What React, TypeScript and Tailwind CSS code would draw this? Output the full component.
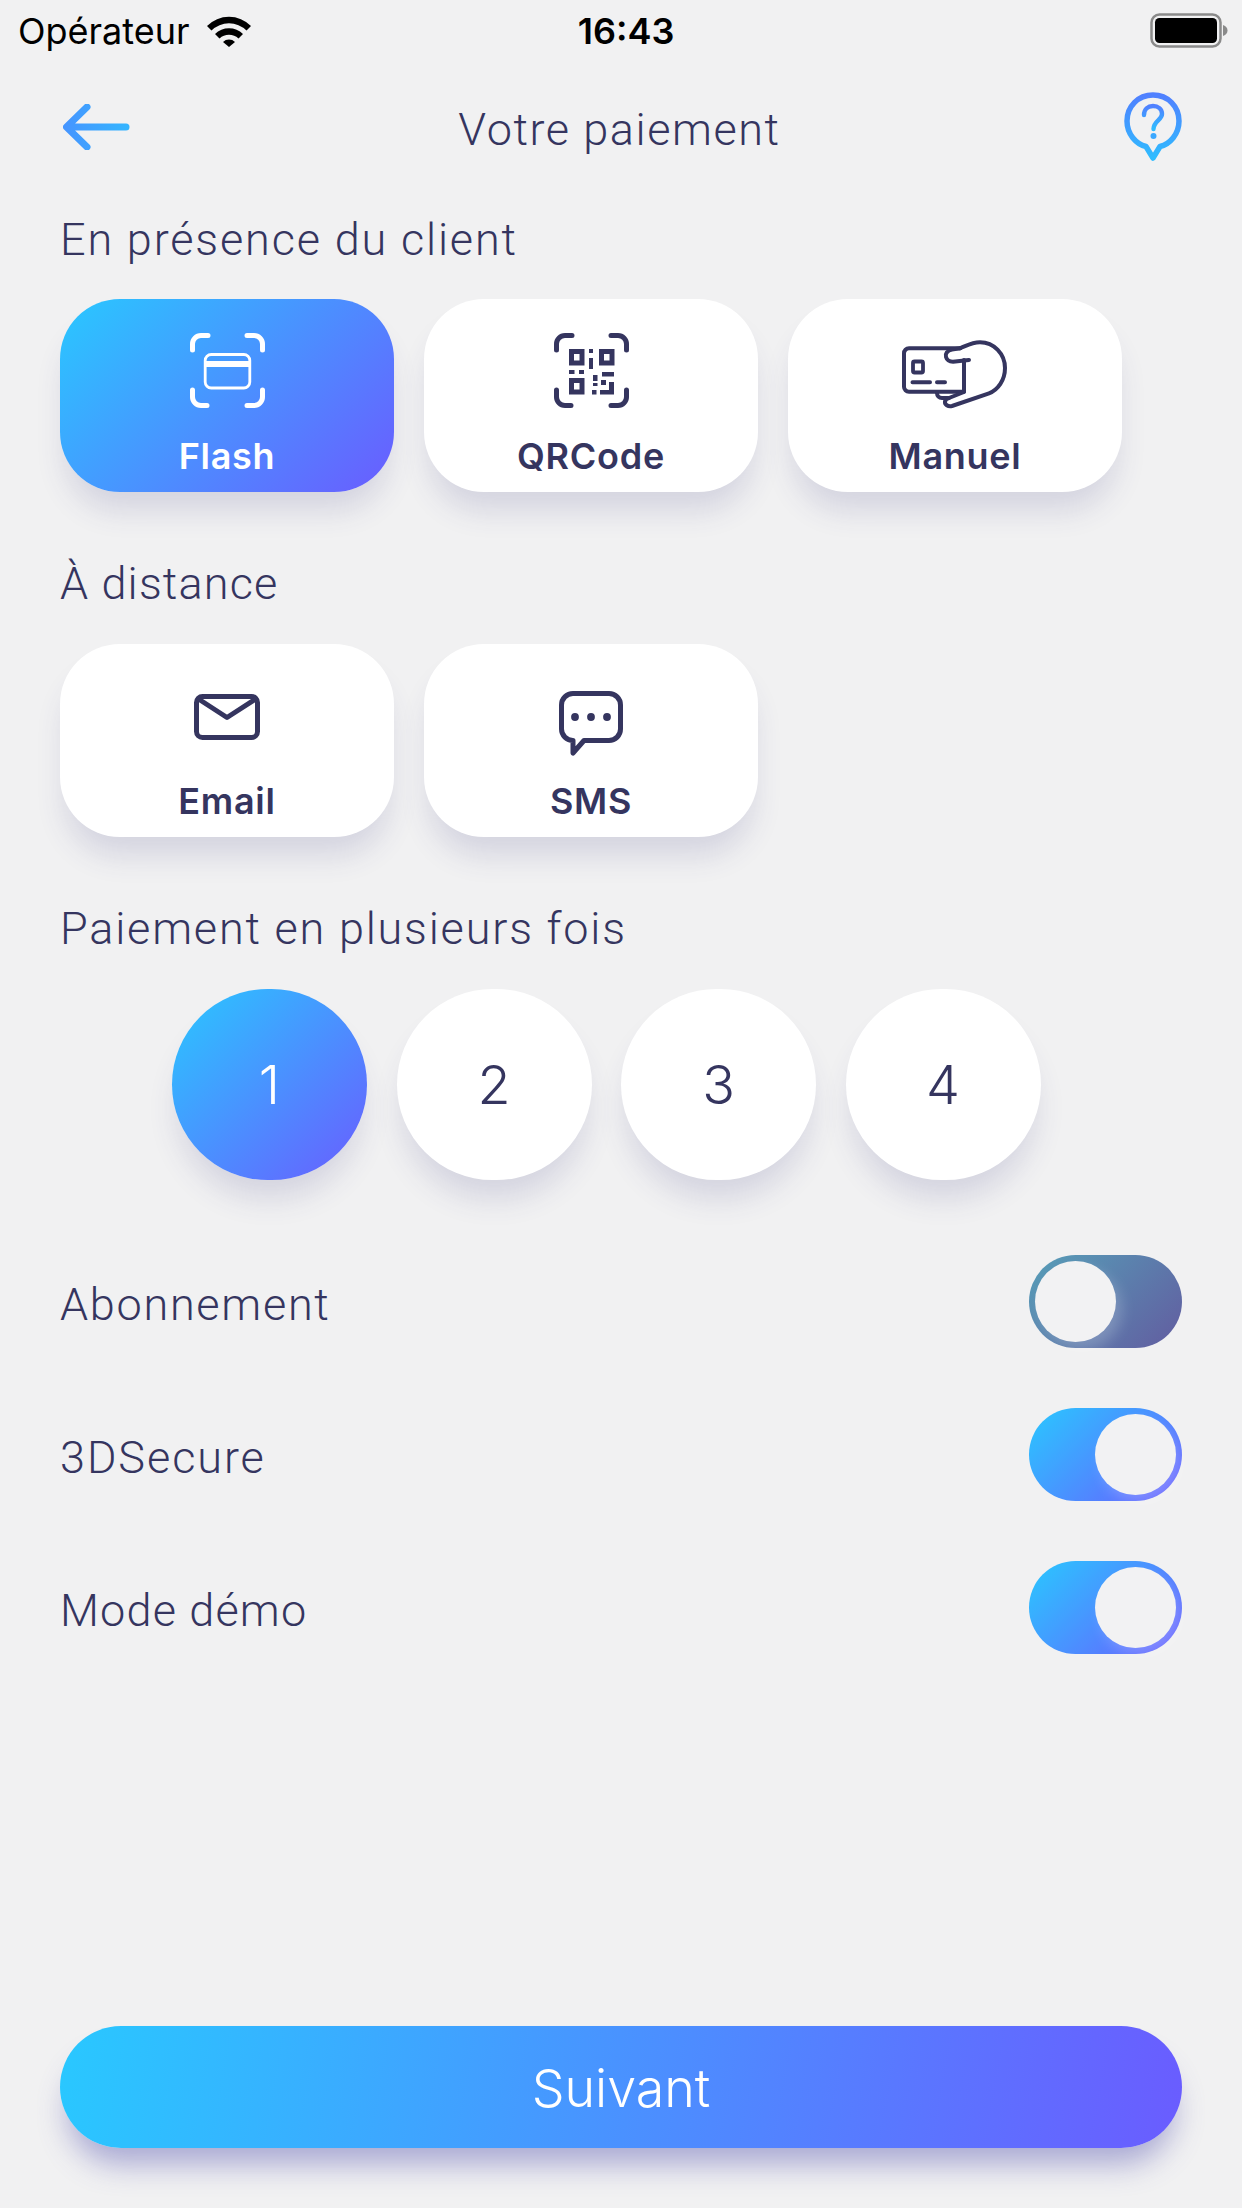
import React from 'react'

const din = "font-['Roboto',sans-serif] font-[350] text-[#35355f] text-[45px] leading-[50px]"
const cardShadow = 'shadow-[0_24px_30px_-6px_rgba(60,60,130,0.16)]'
const activeBg = 'bg-[linear-gradient(135deg,#29c8ff,#6a5cff)]'

function WifiIcon() {
  return (
    <svg width="44" height="32" viewBox="0 0 44 32" fill="#000">
      <path d="M0 11 A31 31 0 0 1 44 11 L39.5 15.5 A25 25 0 0 0 4.5 15.5 Z" />
      <path d="M8 19 A20 20 0 0 1 36 19 L31.5 23.5 A14 14 0 0 0 12.5 23.5 Z" />
      <path d="M16 27 A8.5 8.5 0 0 1 28 27 L22 32 Z" />
    </svg>
  )
}

function BatteryIcon() {
  return (
    <svg width="78" height="36" viewBox="0 0 78 36">
      <rect x="1.5" y="1.5" width="69" height="32" rx="8" fill="none" stroke="#8a8a8a" strokeWidth="2.5" />
      <rect x="5" y="5" width="62" height="25" rx="4.5" fill="#000" />
      <path d="M73 12 C76 13 77.5 15 77.5 17.5 C77.5 20 76 22 73 23 Z" fill="#8a8a8a" />
    </svg>
  )
}

function BackArrow() {
  return (
    <svg width="68" height="46" viewBox="0 0 68 46" fill="none">
      <defs>
        <linearGradient id="arrowGrad" x1="0" y1="0" x2="1" y2="0">
          <stop offset="0" stopColor="#4596ff" />
          <stop offset="1" stopColor="#35b4ff" />
        </linearGradient>
      </defs>
      <path
        d="M24 3 L3.5 23 L24 43 M4 23 H63"
        stroke="url(#arrowGrad)"
        strokeWidth="7"
        strokeLinecap="round"
        strokeLinejoin="round"
      />
    </svg>
  )
}

function HelpIcon() {
  return (
    <svg width="58" height="70" viewBox="0 0 58 70" fill="none">
      <defs>
        <linearGradient id="helpGrad" x1="0" y1="0" x2="0" y2="1" gradientUnits="objectBoundingBox">
          <stop offset="0" stopColor="#5080ff" />
          <stop offset="1" stopColor="#2fbcff" />
        </linearGradient>
      </defs>
      <path
        d="M29 3 C14 3 3 14.5 3 29 C3 42 12 52 22 54.5 L29 66 L36 54.5 C46 52 55 42 55 29 C55 14.5 44 3 29 3 Z"
        stroke="url(#helpGrad)"
        strokeWidth="5.5"
        strokeLinejoin="round"
      />
      <path
        d="M20 23 C20 17 24 14 29 14 C34 14 38 17 38 22 C38 28 29.5 29 29.5 37"
        stroke="url(#helpGrad)"
        strokeWidth="4.4"
        strokeLinecap="round"
      />
      <circle cx="29.5" cy="44" r="3" fill="#3ba8ff" />
    </svg>
  )
}

function FlashIcon() {
  return (
    <svg width="75" height="75" viewBox="0 0 75 75" fill="none" stroke="#fff" strokeLinecap="round">
      <g strokeWidth="5">
        <path d="M2.5 17 V11 A8.5 8.5 0 0 1 11 2.5 H18" />
        <path d="M57 2.5 H64 A8.5 8.5 0 0 1 72.5 11 V17" />
        <path d="M2.5 57 V64 A8.5 8.5 0 0 0 11 72.5 H17" />
        <path d="M57 72.5 H64 A8.5 8.5 0 0 0 72.5 64 V57" />
      </g>
      <rect x="15.2" y="21.5" width="44.6" height="33.5" rx="6" strokeWidth="2.8" />
      <rect x="15" y="28" width="45" height="6" fill="#fff" stroke="none" />
    </svg>
  )
}

function QrIcon() {
  return (
    <svg width="75" height="75" viewBox="0 0 75 75" fill="none" stroke="#35355f">
      <g strokeWidth="5" strokeLinecap="round">
        <path d="M2.5 17 V11 A8.5 8.5 0 0 1 11 2.5 H18" />
        <path d="M57 2.5 H64 A8.5 8.5 0 0 1 72.5 11 V17" />
        <path d="M2.5 57 V64 A8.5 8.5 0 0 0 11 72.5 H17" />
        <path d="M57 72.5 H64 A8.5 8.5 0 0 0 72.5 64 V57" />
      </g>
      <g strokeWidth="5">
        <rect x="17.5" y="18.5" width="10.5" height="11.5" />
        <rect x="47.5" y="18.5" width="10.5" height="11.5" />
        <rect x="17.5" y="47.5" width="10.5" height="11.5" />
      </g>
      <g fill="#35355f" stroke="none">
        <rect x="35" y="16" width="4" height="4" />
        <rect x="35" y="25" width="4" height="11" />
        <rect x="15" y="37" width="5.5" height="4" />
        <rect x="25" y="37" width="5" height="4" />
        <rect x="39" y="42" width="4.5" height="6" />
        <rect x="48" y="39" width="12" height="4.5" />
        <rect x="47" y="47" width="5" height="5" />
        <rect x="55" y="49" width="5" height="12" />
        <rect x="46" y="57" width="14" height="4.5" />
        <rect x="38" y="57" width="4.5" height="4.5" />
        <rect x="39" y="50" width="4.5" height="3" />
      </g>
    </svg>
  )
}

function HandCardIcon() {
  return (
    <svg width="112" height="72" viewBox="0 0 112 72" fill="none" stroke="#35355f" strokeWidth="4" strokeLinecap="round" strokeLinejoin="round">
      <path d="M61 10.3 H10 A5 5 0 0 0 5 15.3 V48.7 A5 5 0 0 0 10 53.7 H65 V22" />
      <path d="M61 10.3 C68 7.5 73 4.3 81 4.3 C95 4.3 106 16 106 30 C106 42 99 52 90 55.3 L53 68 C49 69 45.5 66.5 46 63.5 C46.5 61 48 60.5 50 60" />
      <path d="M61 10.3 L53 11.5 C48 12.5 46 16 47 19 C48 22.5 50.5 23.7 54 23.7 L70 22" />
      <path d="M38 55 C38 58 40 60 43 60 L50 60 L65 54" />
      <rect x="14" y="23.5" width="10" height="11" strokeWidth="3.8" rx="1.5" />
      <path d="M13.5 44.3 H31 M38 44.3 H46" />
    </svg>
  )
}

function MailIcon() {
  return (
    <svg width="66" height="46" viewBox="0 0 66 46" fill="none" stroke="#35355f" strokeWidth="5" strokeLinecap="round" strokeLinejoin="round">
      <rect x="2.5" y="2.5" width="61" height="41" rx="6" />
      <path d="M4.5 5 L33 23.5 L61.5 5" />
    </svg>
  )
}

function SmsIcon() {
  return (
    <svg width="64" height="66" viewBox="0 0 64 66" fill="none">
      <path
        d="M14 2.5 H50 A11.5 11.5 0 0 1 61.5 14 V38 A11.5 11.5 0 0 1 50 49.5 H25 L14 62 V49.5 A11.5 11.5 0 0 1 2.5 38 V14 A11.5 11.5 0 0 1 14 2.5 Z"
        stroke="#35355f"
        strokeWidth="5"
        strokeLinejoin="round"
      />
      <circle cx="16" cy="26" r="3.9" fill="#35355f" />
      <circle cx="32" cy="26" r="3.9" fill="#35355f" />
      <circle cx="48" cy="26" r="3.9" fill="#35355f" />
    </svg>
  )
}

function MethodCard({ label, active, iconClass, children }: { label: string; active?: boolean; iconClass: string; children: React.ReactNode }) {
  return (
    <div className={`w-[334px] h-[193px] rounded-[60px] flex flex-col items-center ${cardShadow} ${active ? activeBg : 'bg-white'}`}>
      <div className={`h-[109px] flex justify-center ${iconClass}`}>{children}</div>
      <span className={`mt-[28px] font-['Inter',sans-serif] font-semibold text-[36px] leading-[40px] tracking-[0.02em] ${active ? 'text-white' : 'text-[#35355f]'}`}>
        {label}
      </span>
    </div>
  )
}

function Installment({ n, active }: { n: number; active?: boolean }) {
  return (
    <div className={`w-[195px] h-[191px] rounded-full flex items-center justify-center font-['Inter',sans-serif] font-[350] text-[54px] ${cardShadow} ${active ? `${activeBg} text-white` : 'bg-white text-[#35355f]'}`}>
      {n}
    </div>
  )
}

function Toggle({ on }: { on: boolean }) {
  return (
    <div className={`w-[153px] h-[93px] rounded-full p-[6px] flex ${on ? `justify-end ${activeBg}` : 'justify-start bg-[linear-gradient(135deg,#569fb8,#625ca0)]'}`}>
      <div className="w-[81px] h-[81px] rounded-full bg-[#f2f2f3] shadow-[6px_8px_14px_rgba(255,255,255,0.2)]" />
    </div>
  )
}

function OptionRow({ label, on, tracking }: { label: string; on: boolean; tracking: string }) {
  return (
    <div className="flex items-center justify-between">
      <span className={`pt-[6px] ${din} ${tracking}`}>{label}</span>
      <Toggle on={on} />
    </div>
  )
}

export default function App() {
  return (
    <div className="min-h-[2208px] w-[1242px] bg-[#f1f1f2] flex flex-col overflow-hidden">
      {/* Status bar */}
      <div className="h-[60px] pt-[2px] pl-[18px] pr-[14px] flex items-center justify-between text-black font-['Inter',sans-serif]">
        <div className="w-[260px] flex items-center gap-[17px]">
          <span className="text-[36px] leading-none font-normal">Opérateur</span>
          <WifiIcon />
        </div>
        <span className="text-[36px] leading-none font-semibold ml-[6px]">16:43</span>
        <div className="w-[260px] flex justify-end">
          <BatteryIcon />
        </div>
      </div>

      <div className="px-[60px] flex flex-col flex-1">
        {/* Nav */}
        <div className="h-[134px] flex items-center justify-between">
          <div className="w-[71px] flex justify-end">
            <BackArrow />
          </div>
          <span className={`pt-[6px] mr-[16px] tracking-[0.035em] ${din}`}>Votre paiement</span>
          <HelpIcon />
        </div>

        <h2 className={`mt-[21px] mb-[34px] tracking-[0.041em] ${din}`}>En présence du client</h2>
        <div className="flex gap-[30px]">
          <MethodCard label="Flash" active iconClass="pt-[34px]">
            <FlashIcon />
          </MethodCard>
          <MethodCard label="QRCode" iconClass="pt-[34px]">
            <QrIcon />
          </MethodCard>
          <MethodCard label="Manuel" iconClass="pt-[39px]">
            <HandCardIcon />
          </MethodCard>
        </div>

        <h2 className={`mt-[67px] mb-[35px] tracking-[0.026em] ${din}`}>À distance</h2>
        <div className="flex gap-[30px]">
          <MethodCard label="Email" iconClass="pt-[50px]">
            <MailIcon />
          </MethodCard>
          <MethodCard label="SMS" iconClass="pt-[47px]">
            <SmsIcon />
          </MethodCard>
        </div>

        <h2 className={`mt-[67px] mb-[35px] tracking-[0.04em] ${din}`}>Paiement en plusieurs fois</h2>
        <div className="flex gap-[29.5px] pl-[112px]">
          <Installment n={1} active />
          <Installment n={2} />
          <Installment n={3} />
          <Installment n={4} />
        </div>

        <div className="mt-[75px] flex flex-col gap-[60px]">
          <OptionRow label="Abonnement" on={false} tracking="tracking-[0.038em]" />
          <OptionRow label="3DSecure" on tracking="tracking-[0.043em]" />
          <OptionRow label="Mode démo" on tracking="tracking-[0.026em]" />
        </div>

        <button className="mt-auto mb-[60px] h-[122px] pt-[4px] rounded-full bg-[linear-gradient(100deg,#29c8ff,#6a5cff)] text-white font-['Inter',sans-serif] font-[350] text-[52px] shadow-[0_24px_30px_-8px_rgba(70,70,170,0.42)]">
          Suivant
        </button>
      </div>
    </div>
  )
}
